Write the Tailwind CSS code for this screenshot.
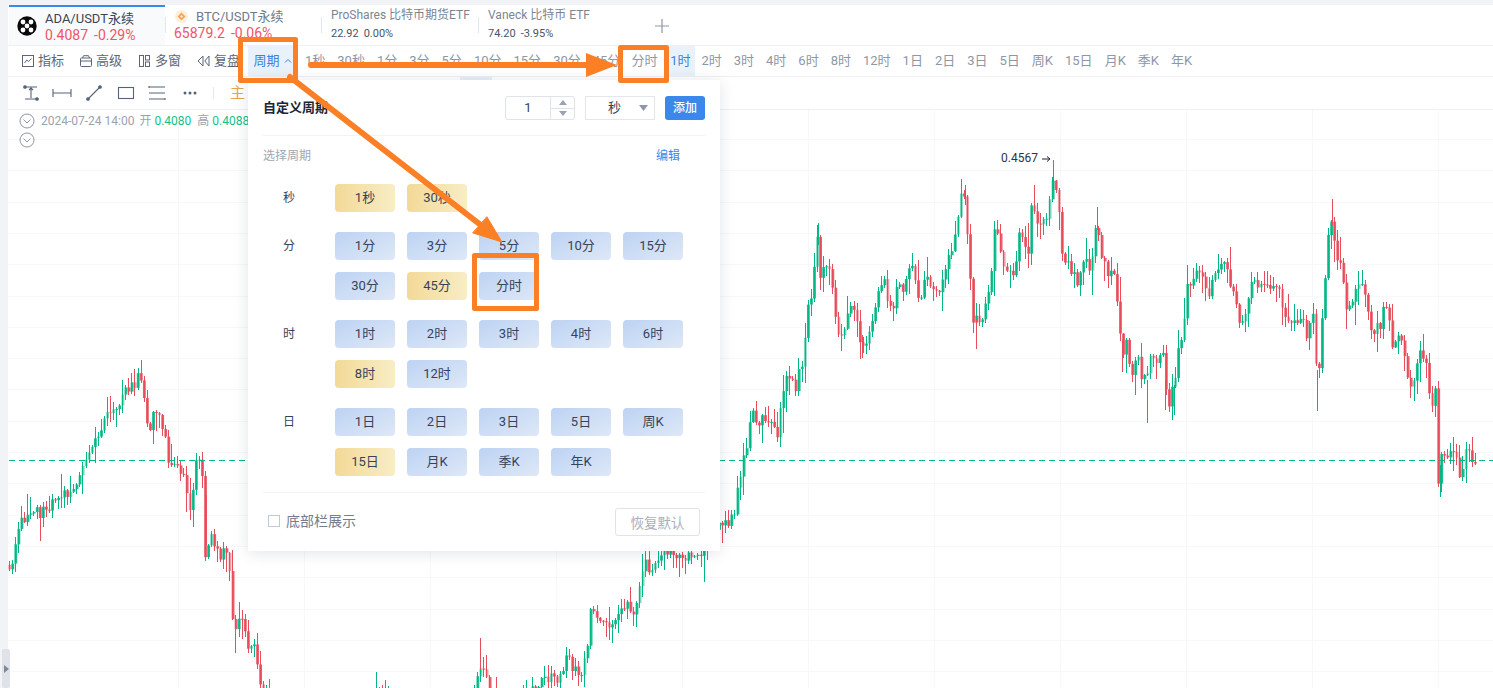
<!DOCTYPE html>
<html lang="zh">
<head>
<meta charset="utf-8">
<title>周期</title>
<script src="https://cdn.jsdelivr.net/npm/@tailwindcss/browser@4"></script>
</head>
<body class="m-0 overflow-hidden">
<div class="relative w-[1493px] h-[688px] overflow-hidden bg-[#f1f3f7] pt-[5px] pl-[9px] flex flex-col font-[Roboto,'Noto_Sans_CJK_SC',sans-serif] text-[13px]">
  <div class="flex-1 bg-white flex flex-col min-h-0 -ml-px">
    <!-- tabs -->
    <div class="h-[41px] flex border-b border-[#eef0f3] shrink-0">
      <div class="ml-px w-[156px] bg-[#f9fafc] border-t-2 border-[#3b87ea] flex items-center pl-[8px] gap-[8px]">
        <svg width="20" height="20" viewBox="0 0 20 20"><circle cx="10" cy="10" r="9.7" fill="#0a0a0a"/><g fill="#fff"><circle cx="6" cy="6" r="2.4"/><circle cx="14" cy="6" r="2.4"/><circle cx="10" cy="10" r="2.4"/><circle cx="6" cy="14" r="2.4"/><circle cx="14" cy="14" r="2.4"/></g></svg>
        <div class="leading-none">
          <div class="text-[13px] text-[#3a4556] h-[18px] pt-[2px]">ADA/USDT永续</div>
          <div class="text-[14px] text-[#ef5566] flex gap-[6px]"><span>0.4087</span><span>-0.29%</span></div>
        </div>
      </div>
      <div class="w-[156px] relative flex flex-col pl-[9px] leading-none">
        <div class="absolute left-0 top-[12px] h-[16px] w-px bg-[#e3e6ea]"></div>
        <div class="flex items-center gap-[8px] h-[21px] pt-[2px]">
          <svg width="13" height="13" viewBox="0 0 13 13" class="ml-px"><circle cx="6.5" cy="6.5" r="6.5" fill="#fdeedd"/><path d="M6.5 2.5 10.5 6.5 6.5 10.5 2.5 6.5Z" fill="#f6a64b"/><path d="M6.5 5 8 6.5 6.5 8 5 6.5Z" fill="#fdeedd"/></svg>
          <span class="text-[13px] text-[#6f7a89]">BTC/USDT永续</span>
        </div>
        <div class="text-[14px] text-[#ef5566] flex gap-[6px]"><span>65879.2</span><span>-0.06%</span></div>
      </div>
      <div class="w-[157px] relative pl-[10px] leading-none">
        <div class="absolute left-0 top-[12px] h-[16px] w-px bg-[#e3e6ea]"></div>
        <div class="text-[12px] text-[#7b8594] pt-[4px] whitespace-nowrap">ProShares 比特币期货ETF</div>
        <div class="text-[11px] text-[#4a5565] flex gap-[5px] pt-[7px]"><span>22.92</span><span>0.00%</span></div>
      </div>
      <div class="w-[160px] relative pl-[10px] leading-none">
        <div class="absolute left-0 top-[12px] h-[16px] w-px bg-[#e3e6ea]"></div>
        <div class="text-[12px] text-[#7b8594] pt-[4px] whitespace-nowrap">Vaneck 比特币 ETF</div>
        <div class="text-[11px] text-[#4a5565] flex gap-[5px] pt-[7px]"><span>74.20</span><span>-3.95%</span></div>
      </div>
      <div class="flex items-center pl-[17px]">
        <svg width="14" height="14" viewBox="0 0 14 14" class="mt-[2px]"><path d="M7 0V14M0 7H14" stroke="#8f98a6" stroke-width="1.2"/></svg>
      </div>
    </div>
    <!-- toolbar -->
    <div class="h-[31px] flex items-center border-b border-[#eef0f3] shrink-0 pl-[14px] text-[#5b6779] relative">
      <div class="flex items-center gap-[4px] w-[58px]">
        <svg width="12" height="12" viewBox="0 0 12 12" fill="none" stroke="#5b6779"><rect x=".5" y=".5" width="11" height="11"/><path d="M2.5 8 4.8 5l1.7 1.6L9.5 3.5"/></svg><span>指标</span>
      </div>
      <div class="flex items-center gap-[4px] w-[59px]">
        <svg width="12" height="12" viewBox="0 0 12 12" fill="none" stroke="#5b6779"><rect x=".5" y="3" width="11" height="8.5" rx="1"/><path d="M.5 6H11.5M2.5 3 3.5.7H8.5L9.5 3"/></svg><span>高级</span>
      </div>
      <div class="flex items-center gap-[5px] w-[58px]">
        <svg width="11" height="12" viewBox="0 0 11 12" fill="none" stroke="#5b6779"><rect x=".5" y=".5" width="4" height="11"/><rect x="6.5" y=".5" width="4" height="4.5"/><rect x="6.5" y="7" width="4" height="4.5"/></svg><span>多窗</span>
      </div>
      <div class="flex items-center gap-[4px] w-[51px]">
        <svg width="13" height="12" viewBox="0 0 13 12" fill="none" stroke="#5b6779"><path d="M6 1 1 6l5 5zM12 1 7.8 6 12 11z"/></svg><span>复盘</span>
      </div>
      <div class="w-[49px] h-full bg-[#e9f1fb] text-[#3b82e0] flex items-center justify-center gap-[4px]">
        <span>周期</span>
        <svg width="8" height="6" viewBox="0 0 8 6" fill="none" stroke="#3b82e0"><path d="M1 4.5 4 1.5 7 4.5"/></svg>
      </div>
      <div class="flex items-center h-full text-[#8e97a5] gap-[12px] pl-[8px] whitespace-nowrap">
        <span>1秒</span><span>30秒</span><span>1分</span><span>3分</span><span>5分</span><span>10分</span><span>15分</span><span>30分</span><span>45分</span><span class="-ml-px">分时</span>
        <span class="h-full w-[30px] -ml-[4px] -mr-[6px] bg-[#e9f1fb] text-[#3b82e0] flex items-center justify-center">1时</span>
        <span>2时</span><span>3时</span><span>4时</span><span>6时</span><span>8时</span><span>12时</span><span>1日</span><span>2日</span><span>3日</span><span>5日</span><span>周K</span><span>15日</span><span>月K</span><span>季K</span><span>年K</span>
      </div>
    </div>
    <!-- drawing tools -->
    <div class="h-[33px] flex items-center border-b border-[#eef0f3] shrink-0 relative">
      <svg width="230" height="20" viewBox="0 0 230 20" class="ml-[14px] mt-[2px] shrink-0" fill="none" stroke="#566377" stroke-width="1.1">
        <g transform="translate(3 0)"><path d="M0 3H12M0 15H12M6 14V4M4 6 6 4l2 2"/><circle cx="0" cy="3" r="1.3" fill="#566377"/><circle cx="12" cy="15" r="1.3" fill="#566377"/></g>
        <path d="M31 5V13M31 9H49M49 5V13"/>
        <g transform="translate(64 0)"><path d="M2 15 14 3"/><circle cx="2" cy="15" r="1.3" fill="#566377"/><circle cx="14" cy="3" r="1.3" fill="#566377"/></g>
        <rect x="96.500" y="3.500" width="15" height="11"/>
        <path d="M127 3H143M127 9H143M127 15H143M127 2V4M143 14V16"/>
        <g fill="#566377" stroke="none"><circle cx="163" cy="9" r="1.5"/><circle cx="168" cy="9" r="1.5"/><circle cx="173" cy="9" r="1.5"/></g>
        <path d="M191.500 3V15" stroke="#dfeaf3"/>
      </svg>
      <span class="absolute left-[222px] top-[7px] text-[15px] leading-[18px] text-[#e9a24e]">主</span>
    </div>
    <!-- chart -->
    <div class="flex-1 relative overflow-hidden min-h-0">
      <svg id="chart" class="absolute left-0 top-0" width="1485" height="578" viewBox="8 110 1485 578"></svg>
      <div class="absolute left-[11px] top-[3px] flex items-center gap-[6px] text-[12px] leading-[14px] whitespace-nowrap">
        <svg width="16" height="16" viewBox="0 0 16 16" fill="none" stroke="#8e97a5"><circle cx="8" cy="8" r="7"/><path d="M4.500 6.500 8 10l3.500-3.500"/></svg>
        <span class="text-[#9aa3af] mr-[-1px]">2024-07-24 14:00</span>
        <span class="text-[#9aa3af]">开 <span class="text-[#16bf87]">0.4080</span></span>
        <span class="text-[#9aa3af]">高 <span class="text-[#16bf87]">0.4088</span></span>
      </div>
      <svg class="absolute left-[11px] top-[22px]" width="16" height="16" viewBox="0 0 16 16" fill="none" stroke="#8e97a5"><circle cx="8" cy="8" r="7"/><path d="M4.500 6.500 8 10l3.500-3.500"/></svg>
    </div>
  </div>

  <!-- left handle -->
  <div class="absolute left-[2px] top-[649px] w-[8px] h-[39px] bg-[#dfe3e9] rounded-[2px] flex items-center justify-center">
    <svg width="5" height="8" viewBox="0 0 5 8"><path d="M0 0 5 4 0 8Z" fill="#7f8896"/></svg>
  </div>

  <div class="absolute left-[460px] top-[77px] w-[32px] h-[3px] bg-[#e6eefa]"></div>

  <!-- period panel -->
  <div class="absolute left-[248px] top-[80px] w-[472px] h-[471px] bg-white shadow-[0_2px_14px_rgba(30,50,80,0.13)] px-[15px] text-[#374357]">
    <div class="h-[56px] flex items-center border-b border-[#f1f3f5] pt-[1px]">
      <span class="font-bold text-[13px] text-[#1c2636]">自定义周期</span>
      <div class="ml-auto flex items-center">
        <div class="w-[70px] h-[24px] border border-[#dfe3ea] rounded-[3px] flex mr-[10px]">
          <div class="flex-1 flex items-center justify-center text-[#374357]">1</div>
          <div class="w-[24px] border-l border-[#dfe3ea] flex flex-col">
            <div class="flex-1 border-b border-[#dfe3ea] flex items-center justify-center"><svg width="8" height="5" viewBox="0 0 8 5"><path d="M4 0 8 5H0Z" fill="#9aa3af"/></svg></div>
            <div class="flex-1 flex items-center justify-center"><svg width="8" height="5" viewBox="0 0 8 5"><path d="M0 0H8L4 5Z" fill="#9aa3af"/></svg></div>
          </div>
        </div>
        <div class="w-[70px] h-[24px] border border-[#e3e6eb] flex items-center pl-[22px] mr-[10px] relative">
          <span>秒</span>
          <svg class="absolute right-[6px] top-[8px]" width="9" height="6" viewBox="0 0 9 6"><path d="M0 0H9L4.500 6Z" fill="#8e97a5"/></svg>
        </div>
        <div class="w-[40px] h-[24px] rounded-[3px] bg-[#3b87ea] text-white text-[12px] font-medium flex items-center justify-center">添加</div>
      </div>
    </div>
    <div class="h-[38px] flex items-center justify-between text-[12px] pt-[1px] pr-[25px]">
      <span class="text-[#a0a7b3]">选择周期</span><span class="text-[#3b87ea]">编辑</span>
    </div>
    <div class="flex flex-col gap-[20px] pt-[10px] pb-[16px] border-b border-[#f1f3f5]">
      <div class="flex">
        <div class="w-[52px] text-center text-[12px] leading-[28px]">秒</div>
        <div class="ml-[20px] grid grid-cols-[repeat(5,60px)] auto-rows-[28px] gap-[12px] text-[13px]">
          <div class="flex items-center justify-center rounded-[4px] bg-linear-to-r from-[#f3d997] to-[#f8edc5]">1秒</div>
          <div class="flex items-center justify-center rounded-[4px] bg-linear-to-r from-[#f3d997] to-[#f8edc5]">30秒</div>
        </div>
      </div>
      <div class="flex">
        <div class="w-[52px] text-center text-[12px] leading-[28px]">分</div>
        <div class="ml-[20px] grid grid-cols-[repeat(5,60px)] auto-rows-[28px] gap-[12px] text-[13px]">
          <div class="flex items-center justify-center rounded-[4px] bg-linear-to-br from-[#bdd3f3] to-[#dee8f7]">1分</div>
          <div class="flex items-center justify-center rounded-[4px] bg-linear-to-br from-[#bdd3f3] to-[#dee8f7]">3分</div>
          <div class="flex items-center justify-center rounded-[4px] bg-linear-to-br from-[#bdd3f3] to-[#dee8f7]">5分</div>
          <div class="flex items-center justify-center rounded-[4px] bg-linear-to-br from-[#bdd3f3] to-[#dee8f7]">10分</div>
          <div class="flex items-center justify-center rounded-[4px] bg-linear-to-br from-[#bdd3f3] to-[#dee8f7]">15分</div>
          <div class="flex items-center justify-center rounded-[4px] bg-linear-to-br from-[#bdd3f3] to-[#dee8f7]">30分</div>
          <div class="flex items-center justify-center rounded-[4px] bg-linear-to-r from-[#f3d997] to-[#f8edc5]">45分</div>
          <div class="flex items-center justify-center rounded-[4px] bg-linear-to-br from-[#bdd3f3] to-[#dee8f7]">分时</div>
        </div>
      </div>
      <div class="flex">
        <div class="w-[52px] text-center text-[12px] leading-[28px]">时</div>
        <div class="ml-[20px] grid grid-cols-[repeat(5,60px)] auto-rows-[28px] gap-[12px] text-[13px]">
          <div class="flex items-center justify-center rounded-[4px] bg-linear-to-br from-[#bdd3f3] to-[#dee8f7]">1时</div>
          <div class="flex items-center justify-center rounded-[4px] bg-linear-to-br from-[#bdd3f3] to-[#dee8f7]">2时</div>
          <div class="flex items-center justify-center rounded-[4px] bg-linear-to-br from-[#bdd3f3] to-[#dee8f7]">3时</div>
          <div class="flex items-center justify-center rounded-[4px] bg-linear-to-br from-[#bdd3f3] to-[#dee8f7]">4时</div>
          <div class="flex items-center justify-center rounded-[4px] bg-linear-to-br from-[#bdd3f3] to-[#dee8f7]">6时</div>
          <div class="flex items-center justify-center rounded-[4px] bg-linear-to-r from-[#f3d997] to-[#f8edc5]">8时</div>
          <div class="flex items-center justify-center rounded-[4px] bg-linear-to-br from-[#bdd3f3] to-[#dee8f7]">12时</div>
        </div>
      </div>
      <div class="flex">
        <div class="w-[52px] text-center text-[12px] leading-[28px]">日</div>
        <div class="ml-[20px] grid grid-cols-[repeat(5,60px)] auto-rows-[28px] gap-[12px] text-[13px]">
          <div class="flex items-center justify-center rounded-[4px] bg-linear-to-br from-[#bdd3f3] to-[#dee8f7]">1日</div>
          <div class="flex items-center justify-center rounded-[4px] bg-linear-to-br from-[#bdd3f3] to-[#dee8f7]">2日</div>
          <div class="flex items-center justify-center rounded-[4px] bg-linear-to-br from-[#bdd3f3] to-[#dee8f7]">3日</div>
          <div class="flex items-center justify-center rounded-[4px] bg-linear-to-br from-[#bdd3f3] to-[#dee8f7]">5日</div>
          <div class="flex items-center justify-center rounded-[4px] bg-linear-to-br from-[#bdd3f3] to-[#dee8f7]">周K</div>
          <div class="flex items-center justify-center rounded-[4px] bg-linear-to-r from-[#f3d997] to-[#f8edc5]">15日</div>
          <div class="flex items-center justify-center rounded-[4px] bg-linear-to-br from-[#bdd3f3] to-[#dee8f7]">月K</div>
          <div class="flex items-center justify-center rounded-[4px] bg-linear-to-br from-[#bdd3f3] to-[#dee8f7]">季K</div>
          <div class="flex items-center justify-center rounded-[4px] bg-linear-to-br from-[#bdd3f3] to-[#dee8f7]">年K</div>
        </div>
      </div>
    </div>
    <div class="flex items-center pt-[15px] pl-[5px] pr-[5px]">
      <span class="w-[12px] h-[12px] border border-[#c3c9d2] mr-[6px] -mt-[2px]"></span>
      <span class="text-[#737d8c] text-[14px] -mt-[2px]">底部栏展示</span>
      <span class="ml-auto w-[85px] h-[28px] rounded-[3px] border border-[#dfe3ea] text-[#a9b0bb] text-[13.5px] pt-[2px] flex items-center justify-center">恢复默认</span>
    </div>
  </div>

  <!-- annotations -->
  <svg class="absolute left-0 top-0 pointer-events-none" width="1493" height="688" viewBox="0 0 1493 688" fill="none" stroke="#fb7f24" stroke-linejoin="round" stroke-linecap="round">
    <rect x="240.500" y="39.500" width="55" height="41" stroke-width="5"/>
    <rect x="620.500" y="47.500" width="46" height="33" stroke-width="5"/>
    <rect x="474.500" y="255.500" width="62" height="53" stroke-width="5"/>
    <path d="M311 65H592" stroke-width="6"/>
    <path d="M586 53 617 65 586 77Z" fill="#fb7f24" stroke="none"/>
    <path d="M290 77 482 226" stroke-width="6"/>
    <path d="M487 217 502 242 473 233Z" fill="#fb7f24" stroke="#fb7f24" stroke-width="1"/>
  </svg>
</div>
<script>
(function(){
  var pts=[9,565,14,555,16,525,25,520,33,515,45,510,60,495,70,490,80,477,85,465,100,427,120,400,138,377,145,397,148,437,155,410,163,430,170,470,178,460,190,507,195,467,201,447,204,560,210,533,220,560,228,547,233,633,240,620,247,643,255,650,262,695,300,730,372,710,376,688,388,690,392,730,470,730,476,675,482,660,490,700,520,720,527,695,537,688,553,675,560,678,567,650,573,668,580,680,587,653,590,612,600,625,613,620,627,607,635,617,640,583,645,557,650,577,655,563,673,550,683,557,700,555,720,525,733,520,737,493,743,460,748,437,752,410,757,430,763,417,777,437,782,393,787,367,795,387,803,360,807,303,812,293,817,233,820,280,827,260,833,287,837,333,845,327,852,293,860,350,868,333,883,280,892,313,898,277,903,300,910,257,920,307,923,273,933,293,940,293,950,250,955,237,958,210,963,190,967,233,970,277,973,320,978,320,983,313,992,273,995,220,1003,267,1012,280,1020,230,1028,253,1030,210,1040,220,1048,213,1053,173,1058,207,1062,257,1068,260,1078,290,1082,253,1090,277,1097,217,1100,257,1107,270,1115,273,1118,315,1122,353,1125,340,1130,373,1138,357,1143,383,1152,352,1157,367,1163,353,1168,410,1173,387,1178,350,1182,330,1187,288,1192,290,1195,263,1203,277,1208,293,1215,273,1222,260,1227,267,1237,313,1243,327,1247,303,1252,277,1257,290,1263,280,1270,293,1275,280,1282,303,1287,323,1293,317,1302,323,1307,333,1312,307,1315,357,1318,377,1320,343,1323,303,1326,270,1328,238,1332,222,1336,260,1339,253,1343,280,1347,310,1352,303,1357,290,1362,280,1368,317,1373,330,1380,323,1383,307,1388,317,1392,350,1397,337,1403,340,1408,390,1413,390,1417,355,1427,357,1430,410,1436,380,1438,487,1441,457,1447,457,1453,447,1459,477,1467,450,1472,460,1475,462];
  function at(x){for(var i=0;i<pts.length-2;i+=2){if(x<=pts[i+2]){var t=(x-pts[i])/(pts[i+2]-pts[i]);return pts[i+1]+t*(pts[i+3]-pts[i+1]);}}return pts[pts.length-1];}
  var s=20240724;function r(){s=(s+0x6D2B79F5)|0;var t=Math.imul(s^(s>>>15),1|s);t=(t+Math.imul(t^(t>>>7),61|t))^t;return((t^(t>>>14))>>>0)/4294967296;}
  var o='';
  [178,304,430,556,682,808,934,1060,1186,1312,1438].forEach(function(x){o+='<path d="M'+(x+.5)+' 110V688" stroke="#f7f8f9"/>';});
  for(var y=139;y<688;y+=31.3){var yy=Math.round(y)+.5;o+='<path d="M8 '+yy+'H1493" stroke="#f7f8f9"/>';}
  var prev=at(9);
  for(var x=9;x<1477;x+=3.06){
    var c=at(x)+(r()-.5)*13;var up=c<prev;var top=Math.min(c,prev),bot=Math.max(c,prev);
    var col=up?'#03b785':'#e84d5b';
    var hi=top-1-r()*r()*26,lo=bot+1+r()*r()*26;
    var wx=Math.round(x)+.5;
    o+='<path d="M'+wx+' '+hi.toFixed(0)+'V'+lo.toFixed(0)+'" stroke="'+col+'"/>';
    o+='<rect x="'+(x-.7).toFixed(2)+'" y="'+top.toFixed(1)+'" width="2.8" height="'+Math.max(bot-top,1).toFixed(1)+'" fill="'+col+'" fill-opacity="'+(r()<.25?.55:.9)+'"/>';
    prev=c;
  }
  // spikes that stand out in the series
  [[1053,160,190,'#03b785'],[1332,199,225,'#e84d5b'],[138,368,385,'#03b785'],[965,185,205,'#03b785'],[818,223,245,'#03b785'],[1097,207,230,'#03b785'],[480,638,670,'#e84d5b'],[1147,380,423,'#e84d5b'],[1317,370,411,'#03b785'],[976,320,349,'#e84d5b'],[1440,465,497,'#03b785'],[862,335,358,'#e84d5b'],[1174,385,415,'#03b785'],[1165,380,410,'#e84d5b'],[1122,340,372,'#e84d5b'],[206,495,545,'#e84d5b']].forEach(function(p){
    o+='<path d="M'+(p[0]+.5)+' '+p[1]+'V'+p[2]+'" stroke="'+p[3]+'"/>';
  });
  o+='<path d="M9 460.500H1493" stroke="#03b785" stroke-dasharray="6 4"/>';
  o+='<text x="1001" y="162" font-size="12" fill="#2b3544" font-family="Roboto,sans-serif">0.4567</text>';
  o+='<path d="M1042 159H1049.500M1047 156.500 1050 159 1047 161.500" stroke="#1c2636" fill="none"/>';
  document.getElementById('chart').innerHTML=o;
})();
</script>
</body>
</html>
